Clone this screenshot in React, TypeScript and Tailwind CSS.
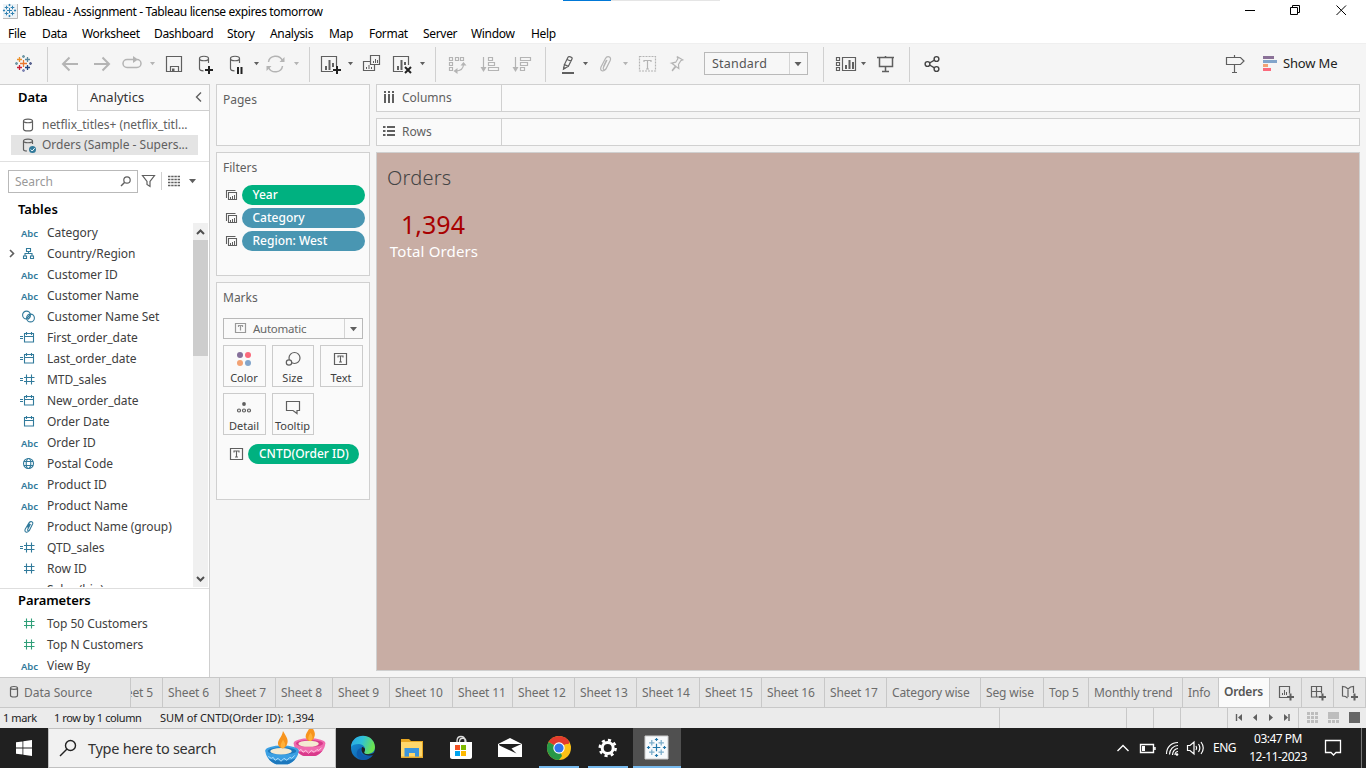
import type { ReactNode } from "react";

const DARK = "#5f5f5f";
const LIGHT = "#b4b4b4";
const BLUE = "#317a9b";
const GREEN = "#2f9e78";

/** A drawing surface whose units are window coordinates. */
function Pic({ x, y, w, h, c = DARK, sw = 1.2, children, className = "" }: {
  x: number; y: number; w: number; h: number; c?: string; sw?: number; children?: ReactNode; className?: string;
}) {
  return (
    <svg width={w} height={h} viewBox={`${x} ${y} ${w} ${h}`} fill="none" stroke={c} strokeWidth={sw} className={"block shrink-0 " + className}>
      {children}
    </svg>
  );
}

function Slot(p: { x: number; w: number; c?: string; sw?: number; children?: ReactNode }) {
  return <Pic y={44} h={40} {...p} />;
}

function Caret({ x, y = 62, c = DARK, s = 2.5 }: { x: number; y?: number; c?: string; s?: number }) {
  return <path d={`M${x - s} ${y}h${2 * s}l${-s} ${s + 0.8}z`} fill={c} stroke="none" />;
}

function Plus({ x, y, r = 3, c, w = 1 }: { x: number; y: number; r?: number; c: string; w?: number }) {
  return <path d={`M${x - r} ${y}h${2 * r}M${x} ${y - r}v${2 * r}`} stroke={c} strokeWidth={w} />;
}

/** The nine-cross mark: centre, four near crosses on the diagonals, four far crosses on the axes. */
function Spark({ cx, cy, d, f, r, colors, w = 1 }: { cx: number; cy: number; d: number; f: number; r: number; colors: string[]; w?: number }) {
  const pos = [[0, 0], [0, -f], [0, f], [-f, 0], [f, 0], [-d, -d], [d, -d], [-d, d], [d, d]];
  return (
    <g>
      {pos.map(([x, y], i) => (
        <Plus key={i} x={cx + x} y={cy + y} r={i === 0 ? r * 1.4 : i < 5 ? r * 0.6 : r} c={colors[i]} w={w} />
      ))}
    </g>
  );
}

function TitleBar() {
  return (
    <div className="flex h-[23px] bg-white">
      <Pic x={0} y={0} w={23} h={23}>
        <path d="M3 4h14.500v14.500H3z" fill="#eef3f6" stroke="none" />
        <path d="M3 18.500h14.500V4" stroke="#b9b9b9" strokeWidth="1" />
        <Spark cx={9.500} cy={10.500} d={3} f={5.500} r={1.800} w={1} colors={Array(9).fill("#3383b3")} />
      </Pic>
      <span className="pt-[3px] font-['Noto_Sans'] text-[12px] leading-[17px] tracking-[-0.36px] text-black">Tableau - Assignment - Tableau license expires tomorrow</span>
      <Pic x={563} y={0} w={157} h={2} sw={0} className="absolute left-[563px] top-0">
        <path d="M563 0h48v1h-48z" fill="#0078d7" />
        <path d="M611 0h193v1H611z" fill="#e5e5e5" />
      </Pic>
      <Pic x={1236} y={0} w={130} h={23} c="#000" sw={1} className="ml-auto">
        <path d="M1245 10.500h10M1290.500 7.500h7v7h-7zM1292.500 7V5.500h7v7H1298M1336.500 5.500l9.500 9.500M1346 5.500l-9.500 9.500" />
      </Pic>
    </div>
  );
}

const MENUS: [string, string][] = [
  ["File", "w-[34px]"], ["Data", "w-10"], ["Worksheet", "w-[72px]"], ["Dashboard", "w-[73px]"], ["Story", "w-[43px]"],
  ["Analysis", "w-[59px]"], ["Map", "w-10"], ["Format", "w-[54px]"], ["Server", "w-12"], ["Window", "w-[60px]"], ["Help", "w-10"],
];

function MenuBar() {
  return (
    <div className="flex h-[20px] bg-white pl-2 font-['Noto_Sans'] text-[12px] leading-[21px] tracking-[-0.32px] text-black">
      {MENUS.map(([m, w]) => <span key={m} className={"shrink-0 " + w}>{m}</span>)}
    </div>
  );
}

const Sep = ({ x }: { x: number }) => <path d={`M${x + 0.5} 47v35`} stroke="#d0d0d0" strokeWidth="1" />;

function Db({ x, y }: { x: number; y: number }) {
  return <path d={`M${x} ${y}c0-3 9-3 9 0c0 3-9 3-9 0v10c0 1.600 2 2.300 4 2.300M${x + 9} ${y}v4.500`} />;
}

function Toolbar() {
  return (
    <div className="flex h-[41px] items-start border-t border-[#efefef] bg-[#f5f5f5]">
      <Slot x={0} w={54}>
        <Spark cx={23.500} cy={63.500} d={4} f={7} r={2.500} w={1.300} colors={["#e8762c", "#7199a6", "#8187b5", "#7199a6", "#5c6692", "#eb912c", "#59879b", "#c72037", "#1f447e"]} />
        <Sep x={47} />
      </Slot>
      <Slot x={54} w={64} c={LIGHT} sw={2}>
        <path d="M78 64H63.500M69.500 57.500L63 64l6.500 6.500M94 64h14.500M102.500 57.500L109 64l-6.500 6.500" />
      </Slot>
      <Slot x={118} w={42} c={LIGHT} sw={1.5}>
        <path d="M131 59.500h-4a3.800 3.800 0 0 0 0 8h10a3.800 3.800 0 0 0 0-8M130 59.500h6" />
        <path d="M133 56l5 3.500-5 3.500z" fill={LIGHT} stroke="none" />
        <Caret x={152.500} c={LIGHT} />
      </Slot>
      <Slot x={160} w={32}>
        <path d="M166.500 56.500h15v15h-15zM170.500 71.500v-5h8v5" /><path d="M172 68.500h2.500v3H172z" fill={DARK} stroke="none" />
      </Slot>
      <Slot x={192} w={32}><Db x={199.500} y={58.500} /><path d="M205 70h8M209 66v8" stroke="#222" strokeWidth="2" /></Slot>
      <Slot x={224} w={38}><Db x={230.500} y={58.500} /><path d="M238 67v7M241.500 67v7" stroke="#222" strokeWidth="2" /><Caret x={256.500} /></Slot>
      <Slot x={262} w={54} c={LIGHT} sw={1.5}>
        <path d="M268.500 62c1-7 11-8 14-1.500M282.500 66c-1 7-11 8-14 1.500" />
        <path d="M284.500 57v5h-5zM266.500 71v-5h5z" fill={LIGHT} stroke="none" /><Caret x={296.500} c={LIGHT} /><Sep x={309} />
      </Slot>
      <Slot x={316} w={42}>
        <path d="M333 71.500h-11.500v-15h15V66" /><path d="M326 70v-4M329.500 70V60M333 67v-4" strokeWidth="2" />
        <path d="M333 70h8M337 66v8" stroke="#222" strokeWidth="2" /><Caret x={350.500} />
      </Slot>
      <Slot x={358} w={30}>
        <path d="M370.500 55.500h9v9h-9zM370 61.500h-6.500v9h11V65" /><path d="M373.500 63v-2M375.500 63v-4M377.500 63v-3M366.500 69v-2M369 69v-4M371.500 69v-2" strokeWidth="1" />
      </Slot>
      <Slot x={388} w={54}>
        <path d="M403 71.500h-9.500v-15h15V65" /><path d="M398 70v-4M401.500 70V60M405 65v-3" strokeWidth="2" />
        <path d="M405 67l6 6M411 67l-6 6" stroke="#222" strokeWidth="2" /><Caret x={422.500} /><Sep x={435} />
      </Slot>
      <Slot x={442} w={32} c={LIGHT}>
        <path d="M449.500 57.500h3v3h-3zM455.500 57.500h3v3h-3zM460.500 57.500h3v3h-3zM449.500 62.500h3v3h-3zM449.500 67.500h3v3h-3zM463.500 64c0 4-2 7-8 7" />
        <path d="M460.500 65.500l3-3.500 3 3.500zM457.500 68v6l-4-3z" fill={LIGHT} stroke="none" />
      </Slot>
      <Slot x={474} w={32} c={LIGHT}>
        <path d="M483.500 57v12M488.500 57.500h4v3h-4zM488.500 62.500h6v3h-6zM488.500 67.500h10v3h-10z" /><path d="M480.500 67h6l-3 5z" fill={LIGHT} stroke="none" />
      </Slot>
      <Slot x={506} w={46} c={LIGHT}>
        <path d="M515.500 57v12M520.500 57.500h10v3h-10zM520.500 62.500h7v3h-7zM520.500 67.500h4v3h-4z" /><path d="M512.500 67h6l-3 5z" fill={LIGHT} stroke="none" /><Sep x={545} />
      </Slot>
      <Slot x={552} w={42}>
        <path d="M568 57.200c.6-1.200 4.600-.2 4.200 1.400l-3.800 7.600-4-1.600zM567 59.500l4.300 1.700M564.400 64.600l-.9 4.400 4.900-2.800" /><path d="M563.200 66.500v3.200l2.600-1.200z" fill={DARK} stroke="none" /><path d="M562 73h12" strokeWidth="2" /><Caret x={585.500} />
      </Slot>
      <Slot x={594} w={40} c={LIGHT}>
        <path d="M607 60l-3.600 7.500c-1 2.600 1.600 3.300 2.600 1.400l4.300-8.600c1.400-3.800-3.200-5-5-1.600l-4.300 8.300c-1.600 4 2.600 5.400 4.500 2M603.500 66.500l3-6.500" /><Caret x={625.500} c={LIGHT} />
      </Slot>
      <Slot x={634} w={30} c={LIGHT}>
        <path d="M639.500 56.500h16v14.500h-16z" strokeDasharray="2 1" /><path d="M644 62v-1.500h7V62M647.500 60.500V69M646 69h3" />
      </Slot>
      <Slot x={664} w={40} c={LIGHT}>
        <path d="M677 56.500l5.800 3.400-2 .9-2.300 3.700 .3 4-2.800-2-3.900 4.500M673.500 64l-2-.8 4.200-1 2.200-3.500-.9-2.200M671.500 63l4.500 3.500M675 66.500l-3 4" />
      </Slot>
      <div className="mt-2 flex h-[23px] w-[104px] shrink-0 border border-[#b9b9b9] bg-[#f7f7f7]">
        <span className="w-[85px] border-r border-[#d4d4d4] pl-[7px] font-['Noto_Sans'] text-[12.5px] leading-[21px] tracking-[0.2px] text-[#555]">Standard</span>
        <Pic x={790} y={53} w={16} h={21}><Caret x={798} y={62} s={3.5} /></Pic>
      </div>
      <Slot x={808} w={60}>
        <Sep x={823} />
        <path d="M836.500 57.500h3v3h-3zM836.500 62.500h3v3h-3zM836.500 67.500h3v3h-3zM842.500 57.500h13v13h-13z" /><path d="M846 69v-4M849.500 69v-9M853 69v-7" strokeWidth="2" /><Caret x={863.500} />
      </Slot>
      <Slot x={868} w={48}>
        <path d="M877 57.500h17M879.500 58v8.500h13V58M885.500 67v4.500M882 71.500h7M885.500 56v1" strokeWidth="1.500" /><Sep x={909} />
      </Slot>
      <Slot x={916} w={34} c="#444" sw={1.4}>
        <circle cx="927.500" cy="64" r="2.400" /><circle cx="936.500" cy="59" r="2.400" /><circle cx="936.500" cy="69" r="2.400" /><path d="M929.500 63l5-2.900M929.500 65l5 2.900" />
      </Slot>
      <Slot x={950} w={270} />
      <Slot x={1220} w={63}>
        <path d="M1226.500 57.500h14l3.500 3.500-3.500 3.500h-14zM1234.500 55v2.500M1234.500 64.500v8M1232 72.500h5" />
        <g stroke="none"><path d="M1263 56h11v3h-11z" fill="#8a7197" /><path d="M1263 60h14v3h-14z" fill="#82a5cb" /><path d="M1263 64h5v3h-5z" fill="#f2a274" /><path d="M1263 68h8v3h-8z" fill="#fb6a7c" /></g>
      </Slot>
      <span className="font-['Noto_Sans'] text-[13px] leading-[39px] tracking-[-0.15px] text-[#222]">Show Me</span>
    </div>
  );
}

const TREE = "font-['Noto_Sans'] text-[12px] text-[#404040] whitespace-nowrap";

function FieldIcon({ kind, green }: { kind: string; green?: boolean }) {
  const c = green ? GREEN : BLUE;
  const calc = kind.startsWith("=");
  const k = calc ? kind.slice(1) : kind;
  if (k === "abc") return <span className="w-8 shrink-0 pl-[6px] pt-px font-['Noto_Sans'] text-[9.5px] font-semibold tracking-[-0.1px] text-[#317a9b]">Abc</span>;
  return (
    <Pic x={0} y={0} w={32} h={21} c={c} sw={1.1}>
      {calc && <path d="M5 9.500h3M5 11.500h3" />}
      {k === "hash" && <path d="M11.500 5.500v10M16.500 5.500v10M9 8.500h10.500M9 12.500h10.500" />}
      {k === "date" && <path d="M9.500 6.500h9v8.500h-9zM9.500 9.500h9M11.500 5v3M16.500 5v3" />}
      {k === "tree" && <path d="M11.500 5.500h4v3h-4zM8.500 13h3v2.500h-3zM15.500 13h3v2.500h-3zM13.500 8.500v2M10 13v-2.500h7V13" />}
      {k === "set" && <><circle cx="11.500" cy="9" r="3.900" /><circle cx="15.500" cy="12" r="3.900" /><path d="M12 12l3-3M13 13.500l2.500-3" /></>}
      {k === "globe" && <><circle cx="13.500" cy="10.500" r="5" /><ellipse cx="13.500" cy="10.500" rx="2.300" ry="5" /><path d="M9 8.500h9M9 12.500h9" /></>}
      {k === "clip" && <path d="M15.500 8l-2.600 5c-1 2 1 2.500 1.700 1l3-6c1-2.500-2-3.200-3.600-1.200l-3.800 6.500c-1.200 3 2 4 3.700 1.400M12.500 11.500l2-4" />}
    </Pic>
  );
}

const FIELDS: [string, string][] = [
  ["abc", "Category"], ["tree", "Country/Region"], ["abc", "Customer ID"], ["abc", "Customer Name"], ["set", "Customer Name Set"],
  ["=date", "First_order_date"], ["=date", "Last_order_date"], ["=hash", "MTD_sales"], ["=date", "New_order_date"], ["date", "Order Date"],
  ["abc", "Order ID"], ["globe", "Postal Code"], ["abc", "Product ID"], ["abc", "Product Name"], ["clip", "Product Name (group)"],
  ["=hash", "QTD_sales"], ["hash", "Row ID"], ["abc", "Sales (bin)"],
];

function FieldRow({ kind, name, green }: { kind: string; name: string; green?: boolean }) {
  return (
    <div className={"flex h-[21px] shrink-0 items-center leading-[21px] " + TREE}>
      <Pic x={0} y={0} w={15} h={21} sw={1.6}>{kind === "tree" && <path d="M10 7l3.500 3.500L10 14" />}</Pic>
      <FieldIcon kind={kind} green={green} />
      <span className="tracking-[-0.04px]">{name}</span>
    </div>
  );
}

function DataPane() {
  return (
    <div className="flex w-[210px] shrink-0 flex-col border-r border-[#cfcfcf] bg-white">
      <div className="flex h-[27px] border-t border-[#cfcfcf] font-['Noto_Sans'] text-[13px] leading-[25px]">
        <span className="w-[77px] pl-[18px] font-semibold tracking-[-0.1px] text-black">Data</span>
        <div className="flex flex-1 border-b border-l border-[#cfcfcf] bg-[#fafafa] pl-3 text-[#333]">
          Analytics
          <Pic x={191} y={85} w={18} h={25} sw={1.4} className="ml-auto"><path d="M201 92.500l-4.500 4.500 4.500 4.500" /></Pic>
        </div>
      </div>
      <div className={"flex h-[51px] flex-col border-b border-[#e0e0e0] pl-[11px] pt-1 " + TREE}>
        <div className="flex h-5 w-[187px] leading-[20px] tracking-[-0.03px] text-[#606060]">
          <Pic x={11} y={115} w={31} h={20}><path d="M23.500 121c0-2.600 9-2.600 9 0v8c0 2.600-9 2.600-9 0zc0 2.300 9 2.300 9 0" /></Pic>
          <span>netflix_titles+ (netflix_titl...</span>
        </div>
        <div className="flex h-5 w-[187px] bg-[#e4e4e4] leading-5 text-[#606060]">
          <Pic x={11} y={135} w={31} h={20}><path d="M27 151c-2 0-3.500-.5-3.500-1.500V141c0-2.600 9-2.600 9 0v3M23.500 141c0 2.300 9 2.300 9 0" /><circle cx="32.500" cy="149.500" r="3.500" fill={BLUE} stroke="none" /><path d="M30.700 149.500l1.500 1.500 2.500-2.800" stroke="white" strokeWidth="1" /></Pic>
          <span>Orders (Sample - Supers...</span>
        </div>
      </div>
      <div className="flex h-[36px] pl-2 pt-2">
        <div className="flex h-[23px] w-[130px] shrink-0 border border-[#b9b9b9] pl-[6px] font-['Noto_Sans'] text-[12px] leading-[22px] text-[#999]">
          Search
          <Pic x={117} y={171} w={20} h={21} className="ml-auto"><circle cx="127" cy="180" r="3.200" /><path d="M124.500 182.500l-3.500 3.500" strokeWidth="1.500" /></Pic>
        </div>
        <Pic x={138} y={170} w={70} h={25}>
          <path d="M142.500 175.500h12l-4.500 6v5l-3-2v-3z" />
          <path d="M161.500 172v18" stroke="#d0d0d0" strokeWidth="1" />
          <path d="M168 176.500h12M168 179.500h12M168 182.500h12M168 185.500h12" strokeDasharray="2.400 .8" strokeWidth="1.300" />
          <Caret x={192.500} y={179} s={3.5} />
        </Pic>
      </div>
      <div className="h-[25px] pl-[18px] font-['Noto_Sans'] text-[13px] font-semibold leading-[22px] text-black">Tables</div>
      <div className="flex h-[366px] border-b border-[#dedede]">
        <div className="mb-px flex flex-1 flex-col overflow-hidden"><div className="-mt-px flex flex-col">{FIELDS.map(([k, n]) => <FieldRow key={n} kind={k} name={n} />)}</div></div>
        <Pic x={193} y={223} w={16} h={364} c="#505050" sw={2}>
          <path d="M193 223h15v364h-15z" fill="#f0f0f0" stroke="none" /><path d="M193 240h15v116h-15z" fill="#cdcdcd" stroke="none" />
          <path d="M197 234l3.500-3.500 3.500 3.500M197 577l3.500 3.500 3.500-3.500" />
        </Pic>
      </div>
      <div className="h-[24px] pl-[18px] font-['Noto_Sans'] text-[13px] font-semibold leading-[23px] tracking-[-0.1px] text-black">Parameters</div>
      <FieldRow kind="hash" name="Top 50 Customers" green />
      <FieldRow kind="hash" name="Top N Customers" green />
      <FieldRow kind="abc" name="View By" />
    </div>
  );
}

const CARD = "border border-[#d0d0d0] bg-[#fafafa]";
const CARD_TITLE = "pl-[6px] font-['Noto_Sans'] text-[12px] leading-[30px] text-[#606060]";

function Filter({ name, color }: { name: string; color: string }) {
  return (
    <div className="flex h-[20px]">
      <Pic x={217} y={185} w={25} h={20} sw={1.1}>
        <path d="M226.500 198v-7.500h9M228.500 192.500h8v7h-8z" /><path d="M230.500 199v-2M232.500 199v-3M234.500 199v-4" strokeWidth="1" />
      </Pic>
      <span className={"w-[123px] rounded-full pl-[10.5px] font-['Noto_Sans'] text-[12px] font-medium leading-[19px] text-white " + color}>{name}</span>
    </div>
  );
}

function TBox({ x, y, w = 13, c = DARK }: { x: number; y: number; w?: number; c?: string }) {
  const m = x + w / 2;
  return <g stroke={c}><path d={`M${x} ${y}h${w}v11h-${w}z`} /><path d={`M${m - 2.500} ${y + 4}v-1.500h5v1.500M${m} ${y + 2.500}v6M${m - 1.500} ${y + 8.500}h3`} strokeWidth="1.100" /></g>;
}

function MarkButton({ name, children }: { name: string; children: ReactNode }) {
  return (
    <div className="flex h-[42px] flex-col items-center border border-[#cbcbcb] font-['Noto_Sans'] text-[11px] leading-[13px] text-[#404040]">
      <Pic x={0} y={0} w={41} h={25}>{children}</Pic>
      <span className="-ml-px whitespace-nowrap">{name}</span>
    </div>
  );
}

function Cards() {
  return (
    <div className="ml-[6px] flex w-[154px] shrink-0 flex-col gap-[6px]">
      <div className={"h-[62px] " + CARD}><div className={CARD_TITLE}>Pages</div></div>
      <div className={"h-[124px] " + CARD}>
        <div className={CARD_TITLE}>Filters</div>
        <div className="mt-[2px] flex flex-col gap-[3px]">
          <Filter name="Year" color="bg-[#00b180]" />
          <Filter name="Category" color="bg-[#4996b2]" />
          <Filter name="Region: West" color="bg-[#4996b2]" />
        </div>
      </div>
      <div className={"h-[218px] " + CARD}>
        <div className={CARD_TITLE}>Marks</div>
        <div className="ml-[6px] mt-[5px] flex h-[21px] w-[140px] border border-[#b9b9b9]">
          <Pic x={224} y={319} w={29} h={19}><g stroke="#999"><path d="M235.500 323.500h10v9h-10z" /><path d="M238.500 327v-1.500h4v1.500M240.500 325.500v5" /></g></Pic>
          <span className="w-[92px] border-r border-[#d4d4d4] font-['Noto_Sans'] text-[11.5px] leading-[19px] tracking-[-0.25px] text-[#666]">Automatic</span>
          <Pic x={345} y={319} w={17} h={19}><Caret x={353.500} y={327} s={3.5} /></Pic>
        </div>
        <div className="ml-[6px] mt-[6px] grid w-[140px] grid-cols-[43px_42px_43px] gap-[6px]">
          <MarkButton name="Color"><g stroke="none"><circle cx="16" cy="9" r="3" fill="#85709a" /><circle cx="24" cy="9" r="3" fill="#fb6a7c" /><circle cx="16" cy="17" r="3" fill="#f2a274" /><circle cx="24" cy="17" r="3" fill="#82a5cb" /></g></MarkButton>
          <MarkButton name="Size"><circle cx="21.500" cy="12" r="5.500" /><circle cx="16" cy="16.500" r="2.700" fill="#fafafa" /></MarkButton>
          <MarkButton name="Text"><TBox x={13.5} y={7.500} w={12} /></MarkButton>
          <MarkButton name="Detail"><circle cx="20" cy="10" r="1.900" fill={DARK} stroke="none" /><circle cx="15" cy="16.500" r="1.500" /><circle cx="20" cy="16.500" r="1.500" /><circle cx="25" cy="16.500" r="1.500" /></MarkButton>
          <MarkButton name="Tooltip"><path d="M13.500 7.500h13v9h-2.500v3l-4-3h-6.500z" /></MarkButton>
        </div>
        <div className="mt-[9px] flex">
          <Pic x={217} y={444} w={31} h={20}><TBox x={230.500} y={448.500} w={12} /></Pic>
          <span className="h-5 w-[111px] whitespace-nowrap rounded-full bg-[#00b180] pl-[11px] font-['Noto_Sans'] text-[12px] font-medium leading-[19px] text-white">CNTD(Order ID)</span>
        </div>
      </div>
    </div>
  );
}

function Shelf({ name, children }: { name: string; children: ReactNode }) {
  return (
    <div className={"flex h-[28px] " + CARD}>
      <div className="flex w-[125px] border-r border-[#d0d0d0] font-['Noto_Sans'] text-[12px] leading-[26px] text-[#606060]">
        <Pic x={377} y={85} w={25} h={26} c={DARK}>{children}</Pic>{name}
      </div>
    </div>
  );
}

function Worksheet() {
  return (
    <div className="ml-[6px] flex w-[984px] shrink-0 flex-col gap-[6px]">
      <Shelf name="Columns"><path d="M385 91v2M389 91v2M393 91v2M385 94v9M389 94v9M393 94v9" strokeWidth="2" /></Shelf>
      <Shelf name="Rows"><path d="M383 93h2.500M383 97h2.500M383 101h2.500M387 93h8M387 97h8M387 101h8" strokeWidth="2" /></Shelf>
      <div className="h-[519px] border border-[#d0d0d0] bg-[#c8ada4] font-['Noto_Sans']">
        <div className="pl-[10px] pt-[11px] text-[20px] font-light leading-[28px] tracking-[0.2px] text-[#444]">Orders</div>
        <div className="mt-[15px] w-[112px] text-center text-[25px] leading-[35px] text-[#a80000]">1,394</div>
        <div className="mt-px w-[114px] text-center text-[15px] leading-[17px] tracking-[0.15px] text-white">Total Orders</div>
      </div>
    </div>
  );
}

const SHEETS: [string, string][] = [
  ["Sheet 6", "w-[57px]"], ["Sheet 7", "w-[56px]"], ["Sheet 8", "w-[57px]"], ["Sheet 9", "w-[57px]"], ["Sheet 10", "w-[63px]"],
  ["Sheet 11", "w-[60px]"], ["Sheet 12", "w-[62px]"], ["Sheet 13", "w-[62px]"], ["Sheet 14", "w-[63px]"], ["Sheet 15", "w-[62px]"],
  ["Sheet 16", "w-[63px]"], ["Sheet 17", "w-[62px]"], ["Category wise", "w-[94px]"], ["Seg wise", "w-[63px]"], ["Top 5", "w-[45px]"],
  ["Monthly trend", "w-[94px]"], ["Info", "w-[36px]"],
];

function SheetTabs() {
  return (
    <div className="flex h-[31px] border-y border-[#c8c8c8] bg-[#e6e6e6] font-['Noto_Sans'] text-[12px] leading-[30px] tracking-[-0.13px] text-[#6c6c6c]">
      <Pic x={0} y={678} w={24} h={29}><path d="M10.500 688c0-2 7-2 7 0v7.500c0 2-7 2-7 0zc0 1.800 7 1.800 7 0" /></Pic>
      <span className="w-[106px] shrink-0 tracking-normal">Data Source</span>
      <div className="flex w-8 shrink-0 justify-end overflow-hidden whitespace-nowrap border-l border-[#c8c8c8] pr-[9px]">Sheet 5</div>
      {SHEETS.map(([s, w]) => <div key={s} className={"shrink-0 whitespace-nowrap border-l border-[#c8c8c8] pl-[5px] " + w}>{s}</div>)}
      <div className="w-[51px] shrink-0 border-l border-[#c8c8c8] bg-[#fafafa] pl-[5px] font-semibold leading-[27px] tracking-[-0.2px] text-[#555]">Orders</div>
      <Pic x={1269} y={678} w={97} h={29}>
        <path d="M1269.500 678v29M1301.500 678v29M1333.500 678v29M1365.500 678v29" stroke="#c8c8c8" strokeWidth="1" />
        <path d="M1287 697.500h-7.500v-11h10v7" /><path d="M1282.500 695v-2M1284.500 695v-5M1286.500 695v-3" strokeWidth="1" />
        <path d="M1319 697h-7.500v-10.500h10v7M1311.500 691.500h10M1316.500 686.500V697" />
        <path d="M1353.500 693v-6.500l-3 .5-2.500 2-2.500-2-3-.5V696l3 .5 2 1.500M1348 689v8" />
        <path d="M1287 697h7M1290.500 693.500v7M1319 697h7M1322.500 693.500v7M1351 697h7M1354.500 693.500v7" strokeWidth="2" />
      </Pic>
    </div>
  );
}

function StatusBar() {
  return (
    <div className="flex h-5 bg-[#ebebeb] pl-[3px] font-['Noto_Sans'] text-[11px] leading-[20px] text-[#222]">
      <span className="w-[51px] tracking-[-0.4px]">1 mark</span><span className="w-[106px] tracking-[-0.4px]">1 row by 1 column</span><span className="tracking-[-0.04px]">SUM of CNTD(Order ID): 1,394</span>
      <Pic x={990} y={708} w={376} h={20} className="ml-auto">
        <path d="M999.500 708v20M1126.500 708v20M1153.500 708v20M1180.500 708v20M1227.500 708v20M1298.500 708v20" stroke="#c8c8c8" strokeWidth="1" />
        <path d="M1236.500 714v7M1289 714v7" strokeWidth="1.400" />
        <g fill={DARK} stroke="none"><path d="M1242 714v7l-4-3.500zM1257 714v7l-4-3.500zM1269 714v7l4-3.500zM1284 714v7l4-3.500z" /></g>
        <g fill="#bdbdbd" stroke="none">
          {[0, 4, 8].map((y) => [0, 4, 8].map((x) => <path key={`${x}-${y}`} d={`M${1307 + x} ${712 + y}h3v3h-3z`} />))}
          <path d="M1328 712h11v7h-11zM1328 720h3v3h-3zM1332 720h3v3h-3zM1336 720h3v3h-3z" />
        </g>
        <path d="M1349 712h11v11h-11z" fill="#666" stroke="none" />
      </Pic>
    </div>
  );
}

function Diya({ x, y, s, a, b, rim }: { x: number; y: number; s: number; a: string; b: string; rim: string }) {
  return (
    <g transform={`translate(${x} ${y}) scale(${s})`} stroke="none">
      <path d="M-17 0c0 6 5 12 11 14h12c6-2 11-8 11-14z" fill={a} />
      <path d="M-14 8c5 3 23 3 28 0c-2 3-5 5-8 6h-12c-3-1-6-3-8-6z" fill={b} />
      <ellipse cx="0" cy="0" rx="17" ry="5" fill={a} /><ellipse cx="0" cy="0.500" rx="14.500" ry="3.700" fill={b} /><ellipse cx="-1" cy="0.800" rx="11" ry="3.300" fill="#f3ead2" />
      <path d="M-14 6l3 2 2-1 2 3 3-2 3 3 3-3 3 2 3-3 2 1 3-3" stroke={rim} fill="none" strokeWidth="1" />
      <path d="M1-20c4 7 6 9 4 14c-1 4-7 6-9 0c-1-5 4-7 5-14z" fill="#f7941e" /><path d="M1-11c3 4 3 7 0 9c-4-2-2-5 0-9z" fill="#ffb13a" />
    </g>
  );
}

function Taskbar() {
  return (
    <div className="flex h-10 bg-[#202020]">
      <Pic x={0} y={728} w={48} h={40}><path d="M16 742.300l6.500-.9v6.200H16zM23.300 741.200l8.700-1.200v7.600h-8.700zM16 748.400h6.500v6.200l-6.500-.9zM23.300 748.400h8.700v7.600l-8.700-1.200z" fill="white" stroke="none" /></Pic>
      <div className="flex w-[288px] shrink-0 border border-[#c0c0c0] bg-[#f1f1f1] font-['Noto_Sans'] text-[14.5px] leading-[38px] tracking-[-0.28px] text-[#333]">
        <Pic x={49} y={729} w={39} h={38} c="#222" sw={1.400}><circle cx="70.500" cy="745.500" r="5" /><path d="M67 749l-7 7" /></Pic>
        Type here to search
        <Pic x={260} y={729} w={75} h={38} className="ml-auto">
          <Diya x={309.500} y={743} s={0.93} a="#f06bae" b="#d93a8b" rim="#ffd0e6" />
          <Diya x={282} y={750.500} s={0.98} a="#3ba0e3" b="#1d78bd" rim="#b5e0fb" />
        </Pic>
      </div>
      <Pic x={336} y={728} w={346} h={40} sw={1}>
        <defs>
          <linearGradient id="edgeTop" x1="0" x2="1" y1="0" y2="0.300"><stop offset="0" stopColor="#2aa5e8" /><stop offset=".5" stopColor="#2fc1d8" /><stop offset="1" stopColor="#6be34f" /></linearGradient>
          <linearGradient id="edgeLow" x1="0" x2="1" y1="0" y2="1"><stop offset="0" stopColor="#1798dc" /><stop offset="1" stopColor="#0c4a9c" /></linearGradient>
        </defs>
        <g stroke="none">
          <circle cx="363" cy="748" r="12" fill="url(#edgeLow)" />
          <path d="M351 747c1-15 23-15 24 0c0 5-4 7-8 7c-3 0-4-1-3-2c3-4-1-8-5-8c-4 0-7 1-8 3z" fill="url(#edgeTop)" />
          <path d="M361 748c-2 6 4 11 12 7c-3 4-7 5-10 5c-9-2-7-11-2-12z" fill="#0d5cab" />
          <path d="M362 747c-2 5 2 9 8 8.500c3 0 5-1 5-3.500c-2 2-5 2.500-7.500 2.200c-2.500 0-4-1-3-2.500c1-2 1-4-2.500-4.700z" fill="#202020" />
          <path d="M401 739h8l2 2h12v17h-22z" fill="#e8a722" /><path d="M401 742h21v15h-21z" fill="#ffd76b" /><path d="M404.500 748h14.500v9h-4v-4h-6v4h-4.500z" fill="#3b95dc" /><path d="M401 756.500h22v1h-22z" fill="#e2aa35" />
          <path d="M450 742h22v15c0 1-1 2-2 2h-18c-1 0-2-1-2-2z" fill="white" />
          <path d="M455 745h5v5h-5z" fill="#f25022" /><path d="M461 745h5v5h-5z" fill="#7fba00" /><path d="M455 751h5v5h-5z" fill="#00a4ef" /><path d="M461 751h5v5h-5z" fill="#ffb900" />
        </g>
        <path d="M457 742v-1c0-6 8-6 8 0v1M459.500 742c0-5 6.500-5 6.500 0" stroke="#ddd" strokeWidth="1.300" />
        <g stroke="none">
          <path d="M498 744l12-6 12 6v13h-24z" fill="white" /><path d="M499 744h22.500l-10 4.500 5 5-17-8z" fill="#202020" />
          <circle cx="559" cy="748" r="12" fill="#fbc116" />
          <path d="M559 748L548.600 742a12 12 0 0 1 20.800 0z" fill="#e33b2e" /><path d="M548.600 742L559 748l3 8-3 4a12 12 0 0 1-10.400-18z" fill="#279847" /><path d="M559 742h10.500l-1 2H561z" fill="#e33b2e" />
          <circle cx="559" cy="748" r="5.700" fill="white" /><circle cx="559" cy="748" r="4.600" fill="#3174ed" />
        </g>
        <circle cx="607.700" cy="748" r="5.500" stroke="white" strokeWidth="3" />
        <circle cx="607.700" cy="748" r="7.900" stroke="white" strokeWidth="2.600" strokeDasharray="3.100 3.100" />
        <path d="M633 728h48v40h-48z" fill="#505050" stroke="none" />
        <path d="M645 736h23v23h-23z" fill="#f7fafc" stroke="#ccc" />
        <Spark cx={656.500} cy={747.500} d={4.700} f={8} r={2.700} w={1.200} colors={["#2377aa", "#2377aa", "#2377aa", "#2377aa", "#2377aa", "#78abc9", "#78abc9", "#78abc9", "#78abc9"]} />
        <path d="M539 766h40v2h-40zM588 766h40v2h-40zM633 766h48v2h-48z" fill="#76b9ed" stroke="none" />
      </Pic>
      <Pic x={1105} y={728} w={108} h={40} c="white" className="ml-auto">
        <path d="M1117.500 751l5.500-5.500 5.500 5.500M1140.500 744.500h13v8h-13zM1155 747v3" strokeWidth="1.400" /><path d="M1142 746h3v5h-3z" fill="white" stroke="none" />
        <path d="M1166.500 754c0-7 5-11.500 11.500-11.500M1169.500 754.500c0-5 4-9 8.500-9M1172.500 755c0-3.500 2.500-6.500 5.500-6.500M1175 755c0-2 1.500-3.500 3-3.500" /><circle cx="1177" cy="754.500" r="1.300" fill="white" stroke="none" />
        <path d="M1187.500 745.500h2.500l4-3.500v12l-4-3.500h-2.500zM1196 746c1 1.500 1 2.500 0 4M1198.500 744c2 3 2 5 0 8M1201 742c3 4 3 8 0 12" />
      </Pic>
      <span className="w-[36px] shrink-0 font-['Noto_Sans'] text-[12px] leading-[39px] tracking-[-0.5px] text-white">ENG</span>
      <div className="w-[58px] shrink-0 whitespace-nowrap pt-[2px] text-center font-['Noto_Sans'] text-[12px] leading-[18px] tracking-[-0.5px] text-white">03:47 PM<br />12-11-2023</div>
      <Pic x={1307} y={728} w={59} h={40} c="white"><path d="M1325.500 740.500h15v12h-4.500l-2.500 2.500-2.500-2.500h-5.500z" strokeWidth="1.300" /><path d="M1361.500 728v40" stroke="#777" strokeWidth="1" /></Pic>
    </div>
  );
}

export default function App() {
  return (
    <div className="relative flex h-[768px] w-[1366px] flex-col overflow-hidden bg-[#f5f5f5]">
      <TitleBar />
      <MenuBar />
      <Toolbar />
      <div className="flex h-[593px] bg-[#f5f5f5]"><DataPane /><Cards /><Worksheet /></div>
      <SheetTabs />
      <StatusBar />
      <Taskbar />
    </div>
  );
}
